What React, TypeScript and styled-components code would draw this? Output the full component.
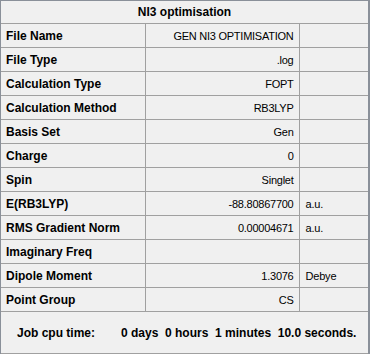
import styled, { createGlobalStyle } from "styled-components";

const Global = createGlobalStyle`
  html, body { margin: 0; padding: 0; background: #ffffff; }
  body { font-family: "Liberation Sans", Arial, sans-serif; }
`;

const Panel = styled.div`
  width: 370px;
  height: 354px;
  background: #f0f0f0;
  border-top: 1px solid #8a9099;
  border-left: 1px solid #8a9099;
  border-right: 2px solid #8a9099;
  box-sizing: border-box;
  display: flex;
  flex-direction: column;
`;

const Table = styled.table`
  border-collapse: collapse;
  width: 100%;
  table-layout: fixed;
  font-size: 11px;
  color: #000;
`;

const Title = styled.th`
  height: 22px;
  padding: 0;
  font-size: 12px;
  font-weight: bold;
  text-align: center;
  border-bottom: 1px solid #a0a0a0;
`;

const Row = styled.tr`
  height: 24px;
  border-bottom: 1px solid #a0a0a0;
`;

const Label = styled.td`
  padding: 0 0 0 5px;
  font-size: 12px;
  font-weight: bold;
  border-right: 1px solid #a0a0a0;
  white-space: nowrap;
`;

const Value = styled.td`
  padding: 0 5px 0 0;
  text-align: right;
  letter-spacing: -0.25px;
  border-right: 1px solid #a0a0a0;
  white-space: nowrap;
`;

const Unit = styled.td`
  padding: 0 0 0 6px;
  letter-spacing: -0.2px;
  white-space: nowrap;
`;

const Footer = styled.div`
  height: 41px;
  display: flex;
  align-items: center;
  font-size: 12px;
  font-weight: bold;
  border-bottom: 1px solid #a0a0a0;
  padding-left: 16px;
`;

const FooterLabel = styled.span`
  width: 104px;
`;

const rows: [string, string, string][] = [
  ["File Name", "GEN NI3 OPTIMISATION", ""],
  ["File Type", ".log", ""],
  ["Calculation Type", "FOPT", ""],
  ["Calculation Method", "RB3LYP", ""],
  ["Basis Set", "Gen", ""],
  ["Charge", "0", ""],
  ["Spin", "Singlet", ""],
  ["E(RB3LYP)", "-88.80867700", "a.u."],
  ["RMS Gradient Norm", "0.00004671", "a.u."],
  ["Imaginary Freq", "", ""],
  ["Dipole Moment", "1.3076", "Debye"],
  ["Point Group", "CS", ""],
];

export default function App() {
  return (
    <>
      <Global />
      <Panel>
        <Table>
          <colgroup>
            <col style={{ width: 144 }} />
            <col style={{ width: 154 }} />
            <col />
          </colgroup>
          <thead>
            <tr>
              <Title colSpan={3}>NI3 optimisation</Title>
            </tr>
          </thead>
          <tbody>
            {rows.map(([l, v, u]) => (
              <Row key={l}>
                <Label>{l}</Label>
                <Value>{v}</Value>
                <Unit>{u}</Unit>
              </Row>
            ))}
          </tbody>
        </Table>
        <Footer>
          <FooterLabel>Job cpu time:</FooterLabel>
          <span>
            0 days&nbsp;&nbsp;0 hours&nbsp;&nbsp;1 minutes&nbsp;&nbsp;10.0 seconds.
          </span>
        </Footer>
      </Panel>
    </>
  );
}
